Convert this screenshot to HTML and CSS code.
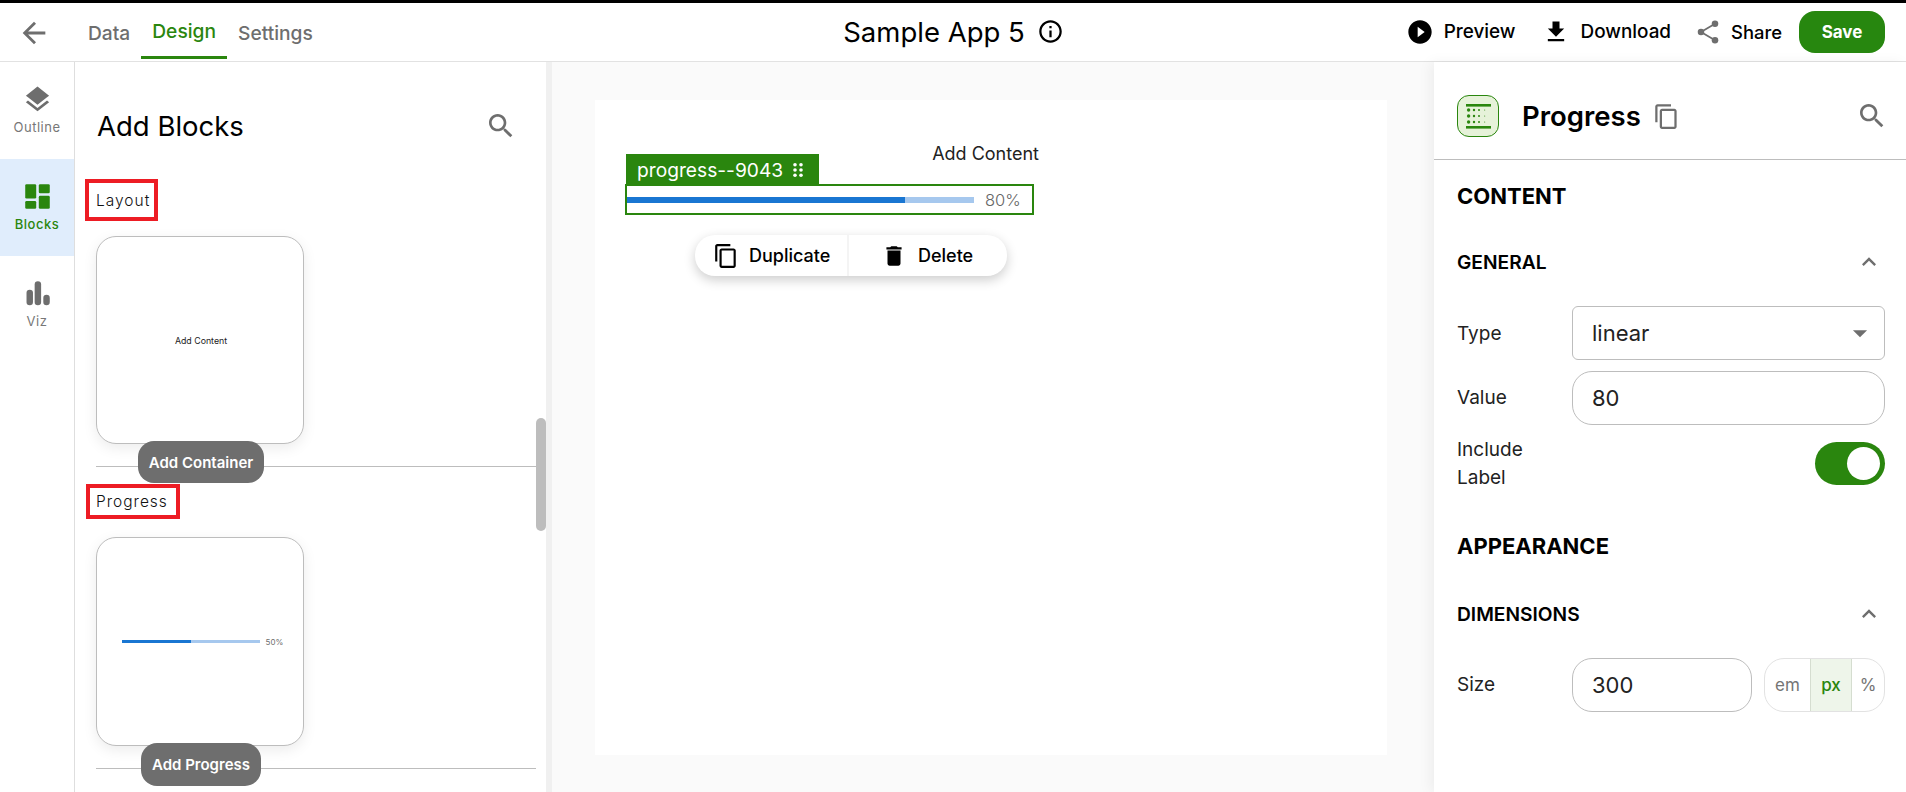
FILE: index.html
```html
<!DOCTYPE html>
<html lang="en">

<head>
  <meta charset="UTF-8">
  <meta name="viewport" content="width=device-width, initial-scale=1.0">
  <title>Sample App 5</title>
  <link rel="stylesheet" href="styles.css">
</head>

<body>
  <header class="topbar">
    <div class="topbar-left">
      <svg class="back-icon" viewBox="0 0 24 24"><path d="M20 11H7.83l5.59-5.59L12 4l-8 8 8 8 1.41-1.41L7.83 13H20v-2z"/></svg>
      <nav class="tabs">
        <a class="tab">Data</a>
        <a class="tab tab-active">Design</a>
        <a class="tab">Settings</a>
      </nav>
    </div>
    <div class="app-title">
      <span>Sample App 5</span>
      <svg class="info-icon" viewBox="0 0 24 24"><path d="M11 7h2v2h-2zm0 4h2v6h-2zm1-9C6.48 2 2 6.48 2 12s4.48 10 10 10 10-4.48 10-10S17.52 2 12 2zm0 18c-4.41 0-8-3.59-8-8s3.59-8 8-8 8 3.59 8 8-3.59 8-8 8z"/></svg>
    </div>
    <div class="topbar-actions">
      <a class="action action-preview">
        <svg viewBox="0 0 24 24"><path d="M12 2C6.48 2 2 6.48 2 12s4.48 10 10 10 10-4.48 10-10S17.52 2 12 2zm-2 14.5v-9l6 4.5-6 4.5z"/></svg>
        Preview
      </a>
      <a class="action action-download">
        <svg viewBox="0 0 24 24"><path d="M19 9h-4V3H9v6H5l7 7 7-7zM5 18v2h14v-2H5z"/></svg>
        Download
      </a>
      <a class="action action-share">
        <svg class="share-icon" viewBox="0 0 24 24"><path class="share-lines" d="M18 5L6 12l12 7"/><circle cx="18" cy="5" r="2.8"/><circle cx="6" cy="12" r="2.8"/><circle cx="18" cy="19" r="2.8"/></svg>
        Share
      </a>
      <button class="save-btn" type="button">Save</button>
    </div>
  </header>

  <main class="workspace">
    <aside class="rail">
      <div class="rail-item">
        <svg viewBox="0 0 24 24"><path d="M11.99 18.54l-7.37-5.73L3 14.07l9 7 9-7-1.63-1.27-7.38 5.74zM12 16l7.36-5.73L21 9l-9-7-9 7 1.63 1.27L12 16z"/></svg>
        <span>Outline</span>
      </div>
      <div class="rail-item rail-item-active">
        <svg viewBox="0 0 24 24"><rect x="2.5" y="2.5" width="8.5" height="11" rx="1"/><rect x="13" y="2.5" width="8.5" height="7" rx="1"/><rect x="2.5" y="15.5" width="8.5" height="6" rx="1"/><rect x="13" y="11.5" width="8.5" height="10" rx="1"/></svg>
        <span>Blocks</span>
      </div>
      <div class="rail-item">
        <svg viewBox="0 0 24 24"><rect x="3.5" y="9" width="5" height="12" rx="2.5"/><rect x="9.8" y="2.5" width="5" height="18.5" rx="2.5"/><rect x="16.5" y="13" width="5" height="8" rx="2.5"/></svg>
        <span>Viz</span>
      </div>
    </aside>

    <section class="blocks-panel">
      <div class="blocks-head">
        <h2>Add Blocks</h2>
        <svg class="search-icon" viewBox="0 0 24 24"><path d="M15.5 14h-.79l-.28-.27C15.41 12.59 16 11.11 16 9.5 16 5.91 13.09 3 9.5 3S3 5.91 3 9.5 5.91 16 9.5 16c1.61 0 3.09-.59 4.23-1.57l.27.28v.79l5 4.99L20.49 19l-4.99-5zm-6 0C7.01 14 5 11.99 5 9.5S7.01 5 9.5 5 14 7.01 14 9.5 11.99 14 9.5 14z"/></svg>
      </div>

      <div class="block-group">
        <span class="group-label group-label-layout">Layout</span>
        <div class="block-card">
          <span class="card-text">Add Content</span>
        </div>
        <div class="card-foot">
          <button class="add-btn add-btn-container" type="button">Add Container</button>
        </div>
      </div>

      <div class="block-group block-group-progress">
        <span class="group-label group-label-progress">Progress</span>
        <div class="block-card block-card-progress">
          <div class="mini-progress">
            <div class="mini-track"><div class="mini-fill"></div></div>
            <span>50%</span>
          </div>
        </div>
        <div class="card-foot">
          <button class="add-btn add-btn-progress" type="button">Add Progress</button>
        </div>
      </div>

      <div class="scroll-track"><div class="scroll-thumb"></div></div>
    </section>

    <section class="canvas">
      <div class="page">
        <div class="page-block">
          <div class="add-content">Add Content</div>
          <div class="block-tag">
            <span>progress--9043</span>
            <svg viewBox="0 0 24 24"><circle cx="8" cy="5" r="2.4"/><circle cx="16" cy="5" r="2.4"/><circle cx="8" cy="12" r="2.4"/><circle cx="16" cy="12" r="2.4"/><circle cx="8" cy="19" r="2.4"/><circle cx="16" cy="19" r="2.4"/></svg>
          </div>
          <div class="selected-block">
            <div class="track"><div class="fill"></div></div>
            <span class="percent">80%</span>
          </div>
          <div class="block-menu">
            <a class="menu-item menu-duplicate">
              <svg viewBox="0 0 24 24"><path d="M16 1H4c-1.1 0-2 .9-2 2v14h2V3h12V1zm3 4H8c-1.1 0-2 .9-2 2v14c0 1.1.9 2 2 2h11c1.1 0 2-.9 2-2V7c0-1.1-.9-2-2-2zm0 16H8V7h11v14z"/></svg>
              Duplicate
            </a>
            <a class="menu-item menu-delete">
              <svg viewBox="0 0 24 24"><path d="M6 19c0 1.1.9 2 2 2h8c1.1 0 2-.9 2-2V7H6v12zM19 4h-3.5l-1-1h-5l-1 1H5v2h14V4z"/></svg>
              Delete
            </a>
          </div>
        </div>
      </div>
    </section>

    <aside class="props">
      <div class="props-head">
        <div class="comp-icon">
          <svg viewBox="0 0 40 40">
            <rect x="8" y="8" width="25" height="2.6"/>
            <rect x="8" y="30" width="25" height="2.6"/>
            <circle cx="10.6" cy="14" r="1.7"/><circle cx="16" cy="14" r="1.2"/><circle cx="21" cy="14" r="1"/><circle cx="26.7" cy="14" r=".5"/>
            <circle cx="10.6" cy="20" r="1.7"/><circle cx="16" cy="20" r="1.2"/><circle cx="21" cy="20" r="1"/><circle cx="26.7" cy="20" r=".5"/>
            <circle cx="10.6" cy="26" r="1.7"/><circle cx="16" cy="26" r="1.2"/><circle cx="21" cy="26" r="1"/><circle cx="26.7" cy="26" r=".5"/>
          </svg>
        </div>
        <span class="props-title">Progress</span>
        <svg class="props-copy" viewBox="0 0 24 24"><path d="M16 1H4c-1.1 0-2 .9-2 2v14h2V3h12V1zm3 4H8c-1.1 0-2 .9-2 2v14c0 1.1.9 2 2 2h11c1.1 0 2-.9 2-2V7c0-1.1-.9-2-2-2zm0 16H8V7h11v14z"/></svg>
        <svg class="search-icon props-search" viewBox="0 0 24 24"><path d="M15.5 14h-.79l-.28-.27C15.41 12.59 16 11.11 16 9.5 16 5.91 13.09 3 9.5 3S3 5.91 3 9.5 5.91 16 9.5 16c1.61 0 3.09-.59 4.23-1.57l.27.28v.79l5 4.99L20.49 19l-4.99-5zm-6 0C7.01 14 5 11.99 5 9.5S7.01 5 9.5 5 14 7.01 14 9.5 11.99 14 9.5 14z"/></svg>
      </div>

      <div class="props-body">
        <h3 class="section-title section-content">CONTENT</h3>
        <div class="sub-head sub-general">
          <h4>GENERAL</h4>
          <svg viewBox="0 0 24 24"><path d="M12 8l-6 6 1.41 1.41L12 10.83l4.59 4.58L18 14z"/></svg>
        </div>
        <div class="field field-type">
          <label>Type</label>
          <div class="select-box">
            <span>linear</span>
            <svg viewBox="0 0 24 24"><path d="M7 10l5 5 5-5z"/></svg>
          </div>
        </div>
        <div class="field field-value">
          <label>Value</label>
          <div class="input-box">80</div>
        </div>
        <div class="field field-toggle">
          <label>Include<br>Label</label>
          <div class="toggle"><div class="knob"></div></div>
        </div>
        <h3 class="section-title section-appearance">APPEARANCE</h3>
        <div class="sub-head sub-dimensions">
          <h4>DIMENSIONS</h4>
          <svg viewBox="0 0 24 24"><path d="M12 8l-6 6 1.41 1.41L12 10.83l4.59 4.58L18 14z"/></svg>
        </div>
        <div class="field field-size">
          <label>Size</label>
          <div class="input-box input-size">300</div>
          <div class="units">
            <span class="unit unit-em">em</span>
            <span class="unit unit-px">px</span>
            <span class="unit unit-pct">%</span>
          </div>
        </div>
      </div>
    </aside>
  </main>
</body>

</html>
```

FILE: styles.css
```css
* {
  box-sizing: border-box;
}

html,
body {
  margin: 0;
  height: 792px;
  overflow: hidden;
}

body {
  font-family: Inter, "Liberation Sans", sans-serif;
  background-color: #fff;
  color: #000;
  border-top: 3px solid #000;
}

h2,
h3,
h4 {
  margin: 0;
}

svg {
  display: block;
  flex: none;
}

/* top bar */
.topbar {
  display: grid;
  grid-template-columns: 1fr auto 1fr;
  align-items: center;
  height: 59px;
  border-bottom: 1px solid #e2e2e2;
}

.topbar-left {
  display: flex;
  align-items: center;
  height: 100%;
}

.back-icon {
  width: 34px;
  height: 34px;
  margin-left: 17px;
  margin-top: 1px;
  fill: #6e6e6e;
}

.tabs {
  display: flex;
  height: 100%;
  margin-left: 26px;
}

.tab {
  display: flex;
  align-items: center;
  justify-content: center;
  height: 56px;
  padding: 3px 11px 0;
  font-size: 19.2px;
  font-weight: 500;
  color: #6e6e6e;
}

.tab-active {
  color: #2a860e;
  border-bottom: 3px solid #2a860e;
}

.app-title {
  display: flex;
  align-items: center;
  padding: 0 0 1px 1px;
  font-size: 27.5px;
}

.info-icon {
  width: 27px;
  height: 27px;
  margin-left: 12px;
}

.topbar-actions {
  display: flex;
  align-items: center;
  justify-content: flex-end;
  padding-right: 21px;
}

.action {
  display: flex;
  align-items: center;
  padding-bottom: 1px;
  font-size: 18.9px;
  font-weight: 500;
}

.action svg {
  width: 28px;
  height: 28px;
  margin-right: 10px;
}

.action-download {
  margin-left: 26px;
}

.action-download svg {
  margin-right: 11px;
}

.action-share {
  margin-left: 23px;
  font-size: 18.4px;
}

.action-share svg {
  margin-right: 9px;
}

.share-icon {
  fill: #6e6e6e;
}

.share-lines {
  fill: none;
  stroke: #6e6e6e;
  stroke-width: 1.5;
}

.save-btn {
  width: 86px;
  height: 42px;
  margin-left: 17px;
  border: none;
  border-radius: 16px;
  background-color: #27870f;
  color: #fff;
  font-family: inherit;
  font-size: 17px;
  font-weight: 700;
}

/* main area */
.workspace {
  display: flex;
  height: 730px;
}

.rail {
  width: 75px;
  flex: none;
  border-right: 1px solid #dedede;
}

.rail-item {
  display: flex;
  flex-direction: column;
  align-items: center;
  height: 97px;
  padding-top: 22px;
  font-size: 13px;
  letter-spacing: 0.5px;
  color: #777;
}

.rail-item svg {
  width: 31px;
  height: 31px;
  margin-bottom: 4px;
  fill: #6e6e6e;
}

.rail-item-active {
  background-color: #e0edfc;
  color: #2a860e;
  font-weight: 500;
}

.rail-item-active svg {
  fill: #2a860e;
}

.blocks-panel {
  position: relative;
  width: 477px;
  flex: none;
  padding-left: 21px;
  overflow: hidden;
  border-right: 6px solid #f0f0f0;
}

.blocks-head {
  display: flex;
  align-items: center;
  justify-content: space-between;
  height: 117px;
  padding: 11px 29px 0 1px;
}

.blocks-head h2 {
  font-size: 27.5px;
  font-weight: 400;
}

.search-icon {
  width: 32px;
  height: 32px;
  fill: #6e6e6e;
}

.block-group {
  display: flex;
  flex-direction: column;
  align-items: flex-start;
}

.group-label {
  display: flex;
  align-items: center;
  font-size: 15.5px;
  font-weight: 300;
  letter-spacing: 1px;
  border: 4px solid #ed1c24;
  color: #111;
}

.group-label-layout {
  width: 73px;
  height: 42px;
  margin-left: -11px;
  padding-left: 7px;
}

.group-label-progress {
  width: 94px;
  height: 35px;
  margin-left: -10px;
  padding-left: 6px;
}

.block-card {
  width: 208px;
  height: 208px;
  margin-top: 15px;
  display: flex;
  align-items: center;
  justify-content: center;
  border: 1px solid #bdbdbd;
  border-radius: 20px;
  background-color: #fff;
  box-shadow: 0 4px 14px rgba(0, 0, 0, 0.08);
}

.block-card-progress {
  height: 209px;
  margin-top: 18px;
}

.card-text {
  margin-left: 2px;
  font-size: 8.8px;
  color: #222;
}

.card-foot {
  display: flex;
  align-items: flex-start;
  width: 440px;
  height: 26px;
  margin-top: -3px;
  border-bottom: 1px solid #bdbdbd;
}

.add-btn {
  flex: none;
  height: 42px;
  border: none;
  border-radius: 16px;
  background-color: #6e6e6e;
  color: #fff;
  font-family: inherit;
  font-size: 15px;
  font-weight: 600;
}

.add-btn-container {
  width: 126px;
  margin-left: 42px;
}

.add-btn-progress {
  width: 120px;
  height: 43px;
  margin-left: 45px;
}

.block-group-progress {
  margin-top: 17px;
}

.mini-progress {
  display: flex;
  align-items: center;
  gap: 6px;
  margin-left: 5px;
  font-size: 8px;
  color: #6e6e6e;
}

.mini-track {
  width: 138px;
  height: 3px;
  background-color: #a6c8ee;
}

.mini-fill {
  width: 50%;
  height: 100%;
  background-color: #1976d2;
}

.scroll-track {
  position: absolute;
  top: 0;
  right: 0;
  width: 10px;
  height: 100%;
}

.scroll-thumb {
  height: 113px;
  margin-top: 356px;
  border-radius: 5px;
  background-color: #bdbdbd;
}

/* canvas */
.canvas {
  flex: 1;
  padding: 38px 47px 37px 43px;
  background-color: #fafafa;
}

.page {
  height: 100%;
  padding: 45px 0 0 30px;
  background-color: #fff;
}

.page-block {
  position: relative;
  width: 409px;
}

.add-content {
  margin-right: -5px;
  font-size: 18px;
  line-height: 18px;
  text-align: right;
  color: #222;
}

.block-tag {
  display: flex;
  align-items: center;
  width: 193px;
  height: 30px;
  margin-left: 1px;
  margin-top: -9px;
  padding: 1px 0 0 11px;
  background-color: #2a860e;
  color: #fff;
  font-size: 19.2px;
}

.block-tag svg {
  width: 18px;
  height: 18px;
  margin-left: 6px;
  fill: #fff;
}

.selected-block {
  display: flex;
  align-items: center;
  height: 31px;
  border: 2px solid #2a860e;
}

.track {
  width: 347px;
  height: 6px;
  background-color: #a6c8ee;
}

.fill {
  width: 80%;
  height: 100%;
  background-color: #1976d2;
}

.percent {
  margin-left: 11px;
  font-size: 16.5px;
  font-weight: 300;
  color: #666;
}

.block-menu {
  position: absolute;
  left: 70px;
  top: 90px;
  display: flex;
  width: 312px;
  height: 41px;
  border-radius: 20px;
  background-color: #fff;
  box-shadow: 0 4px 12px rgba(0, 0, 0, 0.2);
}

.menu-item {
  display: flex;
  align-items: center;
  font-size: 18px;
  font-weight: 500;
}

.menu-item svg {
  width: 26px;
  height: 26px;
}

.menu-duplicate {
  width: 154px;
  padding-left: 18px;
  gap: 10px;
  border-right: 2px solid #f4f4f4;
}

.menu-delete {
  padding-left: 32px;
  gap: 11px;
}

/* properties */
.props {
  width: 472px;
  flex: none;
  background-color: #fff;
  box-shadow: -4px 0 12px rgba(0, 0, 0, 0.05);
  z-index: 1;
}

.props-head {
  display: flex;
  align-items: center;
  height: 98px;
  padding: 11px 18px 0 23px;
  border-bottom: 1px solid #bdbdbd;
}

.comp-icon {
  width: 42px;
  height: 42px;
  border: 1px solid #2a860e;
  border-radius: 12px;
  background-color: #e6f2d9;
}

.comp-icon svg {
  width: 40px;
  height: 40px;
  fill: #2a860e;
}

.props-title {
  margin-left: 23px;
  font-size: 27.5px;
  font-weight: 600;
}

.props-copy {
  width: 27px;
  height: 27px;
  margin-left: 12px;
  fill: #6e6e6e;
}

.props-search {
  margin-left: auto;
}

.props-body {
  padding: 24px 21px 0 23px;
}

.section-title {
  font-size: 22px;
  line-height: 24px;
  font-weight: 700;
}

.sub-head {
  display: flex;
  align-items: center;
  justify-content: space-between;
  height: 24px;
  margin-top: 42px;
}

.sub-head h4 {
  font-size: 19.2px;
  font-weight: 600;
}

.sub-head svg {
  width: 28px;
  height: 28px;
  margin-right: 2px;
  fill: #6e6e6e;
}

.field {
  display: grid;
  grid-template-columns: 115px 1fr;
  align-items: center;
  font-size: 19px;
  color: #222;
}

.field label {
  line-height: 27.5px;
}

.field-type {
  margin-top: 32px;
}

.field-type label {
  padding-top: 1px;
}

.field-value {
  margin-top: 11px;
}

.field-toggle {
  margin-top: 11px;
}

.select-box,
.input-box {
  display: flex;
  align-items: center;
  justify-content: space-between;
  height: 54px;
  padding-left: 19px;
  border: 1px solid #bdbdbd;
  font-size: 22px;
  background-color: #fff;
}

.select-box {
  border-radius: 6px;
  padding-right: 7px;
}

.select-box svg {
  width: 34px;
  height: 34px;
  fill: #6e6e6e;
}

.input-box {
  border-radius: 20px;
}

.toggle {
  justify-self: end;
  display: flex;
  justify-content: flex-end;
  width: 70px;
  height: 43px;
  padding: 5px;
  border-radius: 22px;
  background-color: #2a860e;
}

.knob {
  width: 33px;
  height: 33px;
  border-radius: 50%;
  background-color: #fff;
}

.section-appearance {
  margin-top: 43px;
}

.sub-dimensions {
  margin-top: 44px;
}

.field-size {
  grid-template-columns: 115px 180px 1fr;
  margin-top: 32px;
}

.units {
  display: flex;
  height: 54px;
  margin-left: 12px;
  border: 1px solid #e2e2e2;
  border-radius: 20px;
  overflow: hidden;
  font-size: 17px;
  color: #757575;
}

.unit {
  display: flex;
  align-items: center;
  justify-content: center;
}

.unit-em {
  width: 45px;
}

.unit-px {
  width: 42px;
  background-color: #eef5ea;
  color: #2a860e;
  font-weight: 500;
  border-left: 1px solid #d5ddd0;
  border-right: 1px solid #d5ddd0;
}

.unit-pct {
  flex: 1;
}
```
